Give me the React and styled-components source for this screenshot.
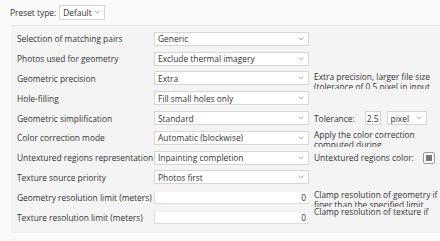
import React from "react";
import styled, { createGlobalStyle } from "styled-components";

const Global = createGlobalStyle`
  html, body { margin: 0; padding: 0; background: #fafafa; }
  body { font-family: "Open Sans", "Noto Sans", sans-serif; color: #333; }
  * { box-sizing: border-box; }
`;

const Page = styled.div`
  width: 440px;
  height: 241px;
  overflow: hidden;
  display: flex;
  flex-direction: column;
  font-size: 8.4px;
`;

const TopBar = styled.div`
  display: flex;
  align-items: center;
  gap: 3px;
  height: 25px;
  padding: 0 0 1px 10px;
`;

const Panel = styled.div`
  margin-left: 11px;
  height: 208px;
  background: #f4f4f4;
  border-top: 1px solid #e6e6e6;
  padding: 3px 0 0 6px;
  display: grid;
  grid-template-columns: 137px 155px 1fr;
  grid-auto-rows: 19.8px;
  align-items: center;
`;

const Label = styled.div`
  white-space: nowrap;
  overflow: hidden;
  color: #333;
`;

const SelectBox = styled.div`
  height: ${(p) => p.$h || 14}px;
  width: ${(p) => p.$w || 155}px;
  background: #fff;
  border: 1px solid #d6d6d6;
  display: flex;
  align-items: center;
  padding-left: 3px;
  position: relative;
  white-space: nowrap;
  color: #333;
`;

const Chevron = styled.svg`
  position: absolute;
  right: 4px;
  top: 50%;
  margin-top: -2px;
  width: 6px;
  height: 4px;
`;

const NumInput = styled.div`
  height: 13px;
  width: 155px;
  background: #fff;
  border: 1px solid #dcdcdc;
  border-top-color: #f2f2f2;
  border-right-color: #f2f2f2;
  display: flex;
  align-items: center;
  justify-content: flex-end;
  padding-right: 2px;
`;

const Side = styled.div`
  padding-left: 5px;
  display: flex;
  align-items: center;
  white-space: nowrap;
`;

const Desc = styled.div`
  line-height: 10px;
  height: ${(p) => p.$h || 17}px;
  overflow: hidden;
  padding-left: 5px;
  white-space: normal;
  width: 132px;
  align-self: ${(p) => p.$align || "center"};
  margin-top: ${(p) => p.$mt || 0}px;
`;

const SmallInput = styled.div`
  height: 14px;
  width: 16px;
  margin-left: 10px;
  margin-right: 6px;
  background: #fff;
  border: 1px solid #d6d6d6;
  display: flex;
  align-items: center;
  justify-content: center;
`;

const Swatch = styled.div`
  width: 12px;
  height: 12px;
  border: 1px solid #999;
  border-radius: 2px;
  background: #fff;
  display: flex;
  align-items: center;
  justify-content: center;
  margin-left: 9px;
  &::after {
    content: "";
    width: 6px;
    height: 6px;
    background: #777;
  }
`;

const Select = ({ children, w, h }) => (
  <SelectBox $w={w} $h={h}>
    {children}
    <Chevron viewBox="0 0 6 4">
      <path d="M0.5 0.5 L3 3 L5.5 0.5" fill="none" stroke="#aaa" strokeWidth="0.8" />
    </Chevron>
  </SelectBox>
);

export default function App() {
  return (
    <Page>
      <Global />
      <TopBar>
        <span>Preset type:</span>
        <Select w={46} h={15}>Default</Select>
      </TopBar>
      <Panel>
        <Label>Selection of matching pairs</Label>
        <Select>Generic</Select>
        <div />

        <Label>Photos used for geometry</Label>
        <Select>Exclude thermal imagery</Select>
        <div />

        <Label>Geometric precision</Label>
        <Select>Extra</Select>
        <Desc $mt={4}>Extra precision, larger file size (tolerance of 0.5 pixel in input</Desc>

        <Label>Hole-filling</Label>
        <Select>Fill small holes only</Select>
        <div />

        <Label>Geometric simplification</Label>
        <Select>Standard</Select>
        <Side>
          <span>Tolerance:</span>
          <SmallInput>2.5</SmallInput>
          <Select w={40}>pixel</Select>
        </Side>

        <Label>Color correction mode</Label>
        <Select>Automatic (blockwise)</Select>
        <Desc $mt={2}>Apply the color correction computed during</Desc>

        <Label>Untextured regions representation</Label>
        <Select>Inpainting completion</Select>
        <Side>
          <span>Untextured regions color:</span>
          <Swatch />
        </Side>

        <Label>Texture source priority</Label>
        <Select>Photos first</Select>
        <div />

        <Label>Geometry resolution limit (meters)</Label>
        <NumInput>0</NumInput>
        <Desc $mt={3}>Clamp resolution of geometry if finer than the specified limit</Desc>

        <Label>Texture resolution limit (meters)</Label>
        <NumInput>0</NumInput>
        <Desc $h={10} $align="start">Clamp resolution of texture if finer than the specified limit</Desc>
      </Panel>
    </Page>
  );
}
